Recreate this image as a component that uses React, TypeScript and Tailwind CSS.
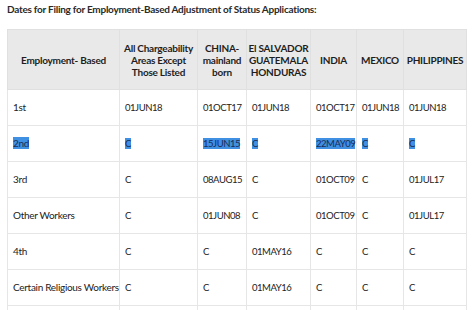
import React from "react";

const cols = [112, 78, 49, 64, 46, 47, 63];
const headers = [
  ["Employment- Based"],
  ["All Chargeability", "Areas Except", "Those Listed"],
  ["CHINA-", "mainland", "born"],
  ["El SALVADOR", "GUATEMALA", "HONDURAS"],
  ["INDIA"],
  ["MEXICO"],
  ["PHILIPPINES"],
];
const rows: { cells: string[]; sel?: boolean }[] = [
  { cells: ["1st", "01JUN18", "01OCT17", "01JUN18", "01OCT17", "01JUN18", "01JUN18"] },
  { cells: ["2nd", "C", "15JUN15", "C", "22MAY09", "C", "C"], sel: true },
  { cells: ["3rd", "C", "08AUG15", "C", "01OCT09", "C", "01JUL17"] },
  { cells: ["Other Workers", "C", "01JUN08", "C", "01OCT09", "C", "01JUL17"] },
  { cells: ["4th", "C", "C", "01MAY16", "C", "C", "C"] },
  { cells: ["Certain Religious Workers", "C", "C", "01MAY16", "C", "C", "C"] },
  { cells: ["", "", "", "", "", "", ""] },
];

export default function App() {
  return (
    <div
      className="w-[474px] h-[310px] overflow-hidden bg-white text-[#222]"
      style={{ fontFamily: "Lato, 'Noto Sans', sans-serif" }}
    >
      <div className="pl-[7px] pt-[2px] h-[29px] text-[10px] tracking-[-0.25px] font-bold text-[#2a2a2a] leading-[14px]">
        Dates for Filing for Employment-Based Adjustment of Status Applications:
      </div>
      <table className="ml-[7px] border-collapse table-fixed w-[459px]">
        <colgroup>
          {cols.map((w, i) => (
            <col key={i} style={{ width: w }} />
          ))}
        </colgroup>
        <thead>
          <tr className="bg-[#e9e9e9] h-[60px]">
            {headers.map((h, i) => (
              <th
                key={i}
                className="border border-[#e0e0e0] text-center align-middle font-bold text-[10px] tracking-[-0.25px] leading-[12px] text-[#1e1e1e] px-0 whitespace-nowrap"
              >
                {h.map((l, j) => (
                  <div key={j}>{l}</div>
                ))}
              </th>
            ))}
          </tr>
        </thead>
        <tbody>
          {rows.map((r, ri) => (
            <tr key={ri} className="h-[36px]">
              {r.cells.map((c, ci) => (
                <td
                  key={ci}
                  className={
                    ci === 0
                      ? "border border-[#e6e6e6] text-[10px] tracking-[-0.3px] leading-[13px] pl-[5px] pr-0 text-left align-middle whitespace-nowrap text-[#222]"
                      : "border border-[#e6e6e6] text-[9.5px] tracking-[-0.45px] leading-[13px] pl-[5px] pr-0 text-left align-middle whitespace-nowrap text-[#222]"
                  }
                >
                  {r.sel ? (
                    <span className="bg-[#3f8fe3] text-[#1a2d55]">{c}</span>
                  ) : (
                    c
                  )}
                </td>
              ))}
            </tr>
          ))}
        </tbody>
      </table>
    </div>
  );
}
